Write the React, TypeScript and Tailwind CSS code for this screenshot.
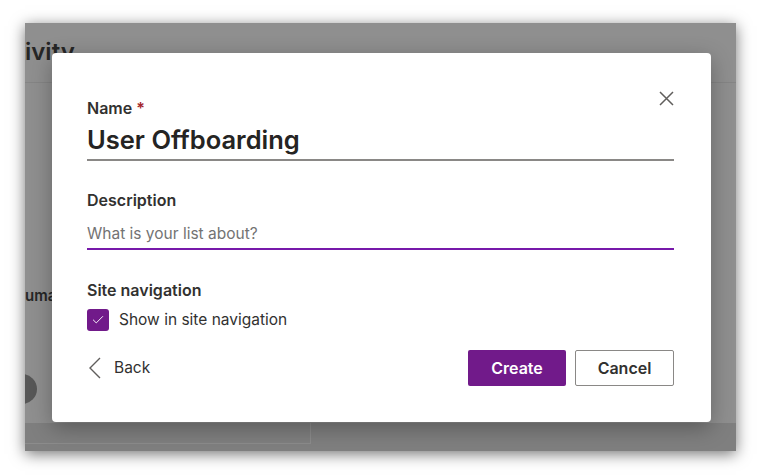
import { Check } from "lucide-react"

export default function App() {
  return (
    <div
      className="w-[768px] h-[476px] bg-white overflow-hidden pt-[23px] pl-[25px]"
      style={{ fontFamily: "Inter, 'Noto Sans', sans-serif" }}
    >
      {/* dimmed page behind the dialog */}
      <div className="relative w-[711px] h-[428px] bg-[#8f8f8f] overflow-hidden shadow-[0_3px_14px_rgba(0,0,0,0.55)]">
        <div className="flex flex-col h-full">
          <div className="h-[60px] border-b border-[#858585] pt-[14px]">
            <span className="block text-[24px] leading-[30px] font-semibold text-[#262626]">ivity</span>
          </div>

          <div className="pt-[203px]">
            <span className="block text-[15px] leading-[20px] font-semibold text-[#262626]">uma</span>
          </div>

          <div className="mt-[68px] -ml-[20px] w-[32px] h-[30px] rounded-full bg-[#575757]" />

          <div className="mt-auto flex h-[28px] bg-[#7f7f7f]">
            <div className="w-[286px] h-[21px] border-r border-b border-[#8c8c8c]" />
            <div className="flex-1" />
          </div>
        </div>

        {/* dialog */}
        <div className="absolute left-[27px] top-[30px] w-[659px] h-[369px] bg-white rounded-[4px] shadow-[0_6px_22px_rgba(0,0,0,0.3)] pl-[35px] pr-[37px] pt-[43px]">
          <button className="absolute top-[38px] right-[37px] w-[15px] h-[15px]">
            <svg width="15" height="15" viewBox="0 0 15 15" fill="none">
              <path d="M1 1 L14 14 M14 1 L1 14" stroke="#605e5c" strokeWidth="1.5" />
            </svg>
          </button>

          {/* Name */}
          <div className="text-[16px] leading-[24px] font-semibold text-[#323130]">
            Name <span className="text-[#a4262c]">*</span>
          </div>
          <div className="pt-[4px] pb-[3px] border-b-2 border-[#8a8886] text-[25.5px] leading-[32px] font-semibold text-[#252423]">
            User Offboarding
          </div>

          {/* Description */}
          <div className="mt-[27px] text-[16px] leading-[24px] font-semibold text-[#323130]">
            Description
          </div>
          <div className="mt-[10px] pb-[2px] border-b-2 border-[#7719aa] text-[15.5px] leading-[24px] text-[#737373]">
            What is your list about?
          </div>

          {/* Site navigation */}
          <div className="mt-[28px] text-[16px] leading-[24px] font-semibold text-[#323130]">
            Site navigation
          </div>
          <label className="mt-[7px] flex items-center gap-[10px]">
            <span className="w-[22px] h-[22px] rounded-[3px] bg-[#711a8a] flex items-center justify-center text-white">
              <Check size={14} strokeWidth={1.6} />
            </span>
            <span className="text-[15.5px] leading-[22px] text-[#323130]">Show in site navigation</span>
          </label>

          {/* Footer */}
          <div className="mt-[19px] flex items-center">
            <button className="flex items-center gap-[12px] text-[15.5px] leading-[24px] text-[#323130]">
              <svg width="14" height="22" viewBox="0 0 14 22" fill="none" className="ml-px">
                <path d="M12 1 L2 11 L12 21" stroke="#605e5c" strokeWidth="1.4" />
              </svg>
              Back
            </button>
            <div className="ml-auto flex gap-[9px]">
              <button className="w-[98px] h-[36px] rounded-[2px] bg-[#711a8a] text-white text-[16px] font-semibold">
                Create
              </button>
              <button className="w-[99px] h-[36px] rounded-[2px] border border-[#8a8886] bg-white text-[#323130] text-[16px] font-semibold">
                Cancel
              </button>
            </div>
          </div>
        </div>
      </div>
    </div>
  )
}
